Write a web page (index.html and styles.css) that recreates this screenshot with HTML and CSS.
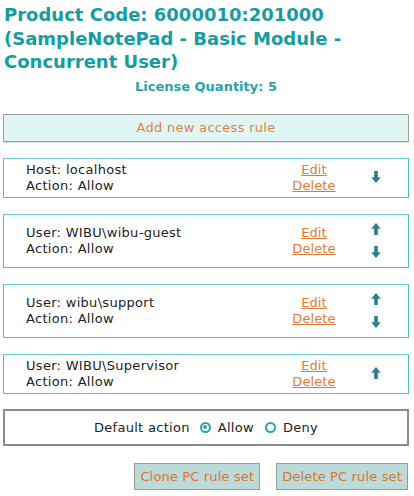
FILE: index.html
```html
<!DOCTYPE html>
<html>
<head>
<meta charset="utf-8">
<link rel="stylesheet" href="styles.css">
</head>
<body>
<div class="page">
  <h1 class="title">Product Code: 6000010:201000 (SampleNotePad - Basic Module - Concurrent User)</h1>
  <div class="qty">License Quantity: 5</div>
  <div class="add-btn">Add new access rule</div>

  <div class="rule">
    <div class="info"><div>Host: localhost</div><div>Action: Allow</div></div>
    <div class="links"><a href="#">Edit</a><a href="#">Delete</a></div>
    <div class="arrows">
      <svg class="arrow" viewBox="0 0 10 12"><path d="M3.2 0h3.6v6.2h3l-4.8 5.8-4.8-5.8h3z"/></svg>
    </div>
  </div>

  <div class="rule">
    <div class="info"><div>User: WIBU\wibu-guest</div><div>Action: Allow</div></div>
    <div class="links"><a href="#">Edit</a><a href="#">Delete</a></div>
    <div class="arrows">
      <svg class="arrow" viewBox="0 0 10 12"><path d="M3.2 12h3.6v-6.2h3l-4.8-5.8-4.8 5.8h3z"/></svg>
      <svg class="arrow" viewBox="0 0 10 12"><path d="M3.2 0h3.6v6.2h3l-4.8 5.8-4.8-5.8h3z"/></svg>
    </div>
  </div>

  <div class="rule">
    <div class="info"><div>User: wibu\support</div><div>Action: Allow</div></div>
    <div class="links"><a href="#">Edit</a><a href="#">Delete</a></div>
    <div class="arrows">
      <svg class="arrow" viewBox="0 0 10 12"><path d="M3.2 12h3.6v-6.2h3l-4.8-5.8-4.8 5.8h3z"/></svg>
      <svg class="arrow" viewBox="0 0 10 12"><path d="M3.2 0h3.6v6.2h3l-4.8 5.8-4.8-5.8h3z"/></svg>
    </div>
  </div>

  <div class="rule">
    <div class="info"><div>User: WIBU\Supervisor</div><div>Action: Allow</div></div>
    <div class="links"><a href="#">Edit</a><a href="#">Delete</a></div>
    <div class="arrows">
      <svg class="arrow" viewBox="0 0 10 12"><path d="M3.2 12h3.6v-6.2h3l-4.8-5.8-4.8 5.8h3z"/></svg>
    </div>
  </div>

  <div class="default-box">
    <span class="label">Default action</span>
    <label class="opt"><span class="radio checked"></span>Allow</label>
    <label class="opt"><span class="radio"></span>Deny</label>
  </div>

  <div class="actions">
    <div class="btn">Clone PC rule set</div>
    <div class="btn">Delete PC rule set</div>
  </div>
</div>
</body>
</html>
```
FILE: styles.css
```css
html, body {
  margin: 0;
  padding: 0;
  background: #fff;
}
body {
  font-family: "DejaVu Sans", Verdana, sans-serif;
  font-size: 13px;
  letter-spacing: 0.3px;
  color: #222;
}
.page {
  width: 406px;
  padding: 0 5px 0 3px;
}
.title {
  margin: 0;
  padding: 3px 0 0 1px;
  font-size: 18px;
  line-height: 23.5px;
  font-weight: bold;
  letter-spacing: 0;
  color: #179ca2;
}
.qty {
  margin-top: 5px;
  text-align: center;
  font-weight: bold;
  letter-spacing: 0;
  color: #2aa3a8;
  line-height: 16px;
}
.add-btn {
  margin-top: 19px;
  height: 26px;
  line-height: 26px;
  text-align: center;
  background: #e2f5f5;
  border: 1px solid #9e9e9e;
  box-shadow: 0 1px 0 #ddd;
  color: #e0843c;
}
.rule {
  margin-top: 16px;
  display: grid;
  grid-template-columns: 1fr 84px 40px;
  align-items: center;
  padding: 3px 12px 3px 22px;
  border: 1px solid #4fbcc2;
  border-top-color: #6cc9ce;
  line-height: 16px;
}
.info {
  color: #222;
}
.links {
  display: flex;
  flex-direction: column;
  align-items: center;
  letter-spacing: 0.1px;
}
.links a {
  color: #e07a30;
  text-decoration: underline;
}
.arrows {
  display: flex;
  flex-direction: column;
  align-items: center;
}
.arrow {
  width: 10px;
  height: 12px;
  margin: 5px 0 6px;
  fill: #2a8189;
}
.default-box {
  margin-top: 15px;
  height: 33px;
  border: 2px solid #8c8c8c;
  display: flex;
  align-items: center;
  justify-content: center;
}
.label {
  margin-right: 10px;
}
.opt {
  display: flex;
  align-items: center;
  gap: 7px;
}
.opt + .opt {
  margin-left: 11px;
}
.radio {
  width: 7px;
  height: 7px;
  border: 2px solid #2aa3a8;
  border-radius: 50%;
  position: relative;
}
.radio.checked::after {
  content: "";
  position: absolute;
  left: 1.5px;
  top: 1.5px;
  width: 4px;
  height: 4px;
  border-radius: 50%;
  background: #2aa3a8;
}
.actions {
  margin-top: 17px;
  display: flex;
  justify-content: flex-end;
  gap: 16px;
  padding-right: 1px;
}
.btn {
  height: 25px;
  line-height: 26px;
  padding: 0 5px;
  letter-spacing: 0.15px;
  background: #bddada;
  border: 1px solid #9a9a9a;
  color: #d9772f;
}
```
